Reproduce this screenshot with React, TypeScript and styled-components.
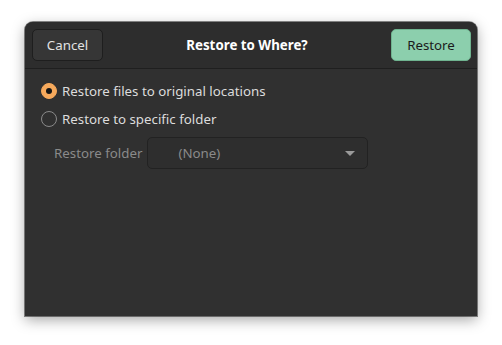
import styled, { createGlobalStyle } from "styled-components";

const Global = createGlobalStyle`
  html, body {
    margin: 0;
    padding: 0;
    background: #ffffff;
  }
  body {
    font-family: "Noto Sans", "Open Sans", sans-serif;
  }
`;

const Page = styled.div`
  width: 502px;
  height: 345px;
  padding: 22px 25px 0 25px;
  box-sizing: border-box;
`;

const Window = styled.div`
  width: 452px;
  height: 294px;
  background: #303030;
  border-radius: 8px 8px 0 0;
  box-shadow: 0 0 0 1px rgba(0, 0, 0, 0.45), 0 4px 14px rgba(0, 0, 0, 0.35);
  display: flex;
  flex-direction: column;
  overflow: hidden;
`;

const HeaderBar = styled.div`
  height: 47px;
  flex-shrink: 0;
  background: #2d2d2d;
  border-bottom: 1px solid #1f1f1f;
  display: grid;
  grid-template-columns: auto 1fr auto;
  align-items: center;
  padding: 0 6px 0 7px;
  box-sizing: border-box;
`;

const Button = styled.button<{ $primary?: boolean }>`
  height: 32px;
  padding: 0;
  border-radius: 5px;
  font-family: inherit;
  font-size: 13.3px;
  border: 1px solid ${(p) => (p.$primary ? "#6fb38f" : "#1e1e1e")};
  background: ${(p) => (p.$primary ? "#8ccfad" : "#363636")};
  color: ${(p) => (p.$primary ? "#1b1b1b" : "#e2e2e2")};
  width: ${(p) => (p.$primary ? "80px" : "71px")};
`;

const Title = styled.div`
  text-align: center;
  color: #ffffff;
  font-weight: 700;
  font-size: 13.3px;
`;

const Body = styled.div`
  display: flex;
  flex-direction: column;
  padding: 11px 0 0 16px;
  gap: 6px;
`;

const RadioRow = styled.label`
  display: flex;
  align-items: center;
  gap: 5px;
  height: 22px;
  color: #dcdcdc;
  font-size: 13.3px;
`;

const Radio = styled.span<{ $checked?: boolean }>`
  width: 16px;
  height: 16px;
  border-radius: 50%;
  box-sizing: border-box;
  display: flex;
  align-items: center;
  justify-content: center;
  background: ${(p) => (p.$checked ? "#f6a95c" : "transparent")};
  border: 1px solid ${(p) => (p.$checked ? "#f6a95c" : "#8a8a8a")};

  &::after {
    content: "";
    width: 6px;
    height: 6px;
    border-radius: 50%;
    background: ${(p) => (p.$checked ? "#151515" : "transparent")};
  }
`;

const FolderRow = styled.div`
  display: flex;
  align-items: center;
  gap: 5px;
  padding-left: 13px;
  margin-top: 1px;
`;

const FolderLabel = styled.span`
  color: #8a8a8a;
  font-size: 13.3px;
`;

const Dropdown = styled.div`
  width: 221px;
  height: 32px;
  box-sizing: border-box;
  border: 1px solid #222222;
  border-radius: 5px;
  background: #2e2e2e;
  display: flex;
  align-items: center;
  padding: 0 12px 0 30px;
  color: #8a8a8a;
  font-size: 13.3px;
`;

const DropdownText = styled.span`
  flex: 1;
`;

const Arrow = styled.span`
  width: 0;
  height: 0;
  border-left: 5px solid transparent;
  border-right: 5px solid transparent;
  border-top: 5px solid #9a9a9a;
`;

export default function App() {
  return (
    <Page>
      <Global />
      <Window>
        <HeaderBar>
          <Button>Cancel</Button>
          <Title>Restore to Where?</Title>
          <Button $primary>Restore</Button>
        </HeaderBar>
        <Body>
          <RadioRow>
            <Radio $checked />
            Restore files to original locations
          </RadioRow>
          <RadioRow>
            <Radio />
            Restore to specific folder
          </RadioRow>
          <FolderRow>
            <FolderLabel>Restore folder</FolderLabel>
            <Dropdown>
              <DropdownText>(None)</DropdownText>
              <Arrow />
            </Dropdown>
          </FolderRow>
        </Body>
      </Window>
    </Page>
  );
}
